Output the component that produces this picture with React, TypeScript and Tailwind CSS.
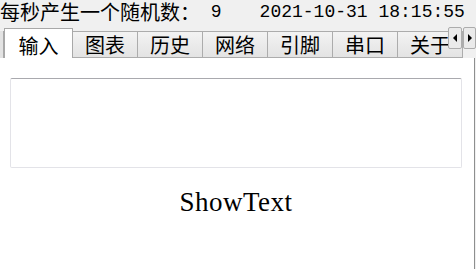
import { useState } from "react"

const tabs = ["输入", "图表", "历史", "网络", "引脚", "串口", "关于"]

const cjk = "font-['Noto_Sans_CJK_SC',sans-serif]"

export default function App() {
  const [active, setActive] = useState(0)

  return (
    <div className="w-[476px] h-[269px] overflow-hidden bg-[#f0f0f0] flex flex-col text-black">
      {/* status line */}
      <div className="h-[28px] flex items-start shrink-0">
        <span className={`${cjk} text-[20px] leading-[24px]`}>每秒产生一个随机数：</span>
        <span className="font-['Liberation_Mono',monospace] text-[18px] leading-[24px] whitespace-pre"> 9</span>
        <span className="ml-[38px] font-['Liberation_Mono',monospace] text-[18px] leading-[24px] whitespace-pre">
          2021-10-31 18:15:55
        </span>
      </div>

      {/* tab strip */}
      <div className="h-[30px] flex items-end shrink-0 relative">
        <div className="flex-1 flex items-end h-full overflow-hidden">
          <div className="w-[4px] h-[27px] shrink-0 bg-[#e3e3e3] border-r border-[#a8a8a8]" />
          {tabs.map((t, i) =>
            i === active ? (
              <button
                key={t}
                onClick={() => setActive(i)}
                className={`${cjk} shrink-0 w-[69px] h-[30px] bg-white border border-b-0 border-[#a8a8a8] text-[20px] leading-[20px] pt-[4px] relative z-10`}
              >
                {t}
              </button>
            ) : (
              <button
                key={t}
                onClick={() => setActive(i)}
                className={`${cjk} shrink-0 w-[65px] h-[27px] bg-gradient-to-b from-[#f3f3f3] to-[#e3e3e3] border-y border-r border-[#acacac] text-[20px] leading-[20px] pt-[1px]`}
              >
                {t}
              </button>
            )
          )}
        </div>
        <div className="absolute right-0 top-[-1px] flex gap-[1px] z-20">
          <div className="w-[14px] h-[22px] bg-[#eaeaea] border border-[#acacac] rounded-[2px] flex items-center justify-center">
            <svg width="5" height="8" viewBox="0 0 5 8">
              <path d="M4 0 L0 4 L4 8 Z" fill="#000" />
            </svg>
          </div>
          <div className="w-[13px] h-[22px] bg-[#eaeaea] border border-[#acacac] rounded-[2px] flex items-center justify-center">
            <svg width="5" height="8" viewBox="0 0 5 8">
              <path d="M1 0 L5 4 L1 8 Z" fill="#000" />
            </svg>
          </div>
        </div>
      </div>

      {/* page */}
      <div className="flex-1 bg-white mr-[1px] border-r border-[#8e8f8f] flex flex-col">
        <div className="ml-[10px] mr-[12px] mt-[20px] h-[90px] rounded-[2px] border border-[#e3e3e8] border-t-[#a9a9ae]" />
        <div className="mt-[19px] text-center font-['Liberation_Serif',serif] text-[27px] leading-[31px] pr-[2px] tracking-[0.5px]">
          ShowText
        </div>
      </div>
    </div>
  )
}
